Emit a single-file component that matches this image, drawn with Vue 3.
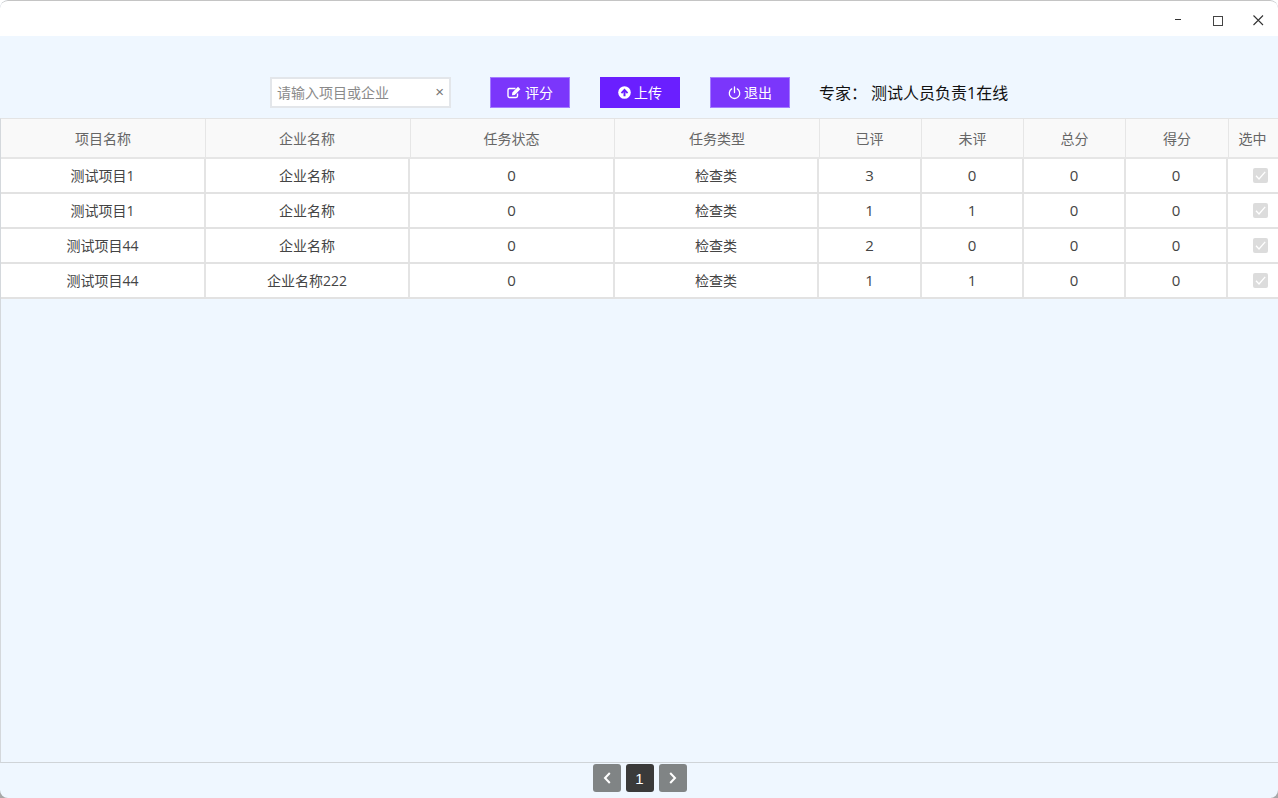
<script setup>
const headCols = ['项目名称', '企业名称', '任务状态', '任务类型', '已评', '未评', '总分', '得分', '选中']
const rows = [
  ['测试项目1', '企业名称', '0', '检查类', '3', '0', '0', '0'],
  ['测试项目1', '企业名称', '0', '检查类', '1', '1', '0', '0'],
  ['测试项目44', '企业名称', '0', '检查类', '2', '0', '0', '0'],
  ['测试项目44', '企业名称222', '0', '检查类', '1', '1', '0', '0']
]
const isNum = (c) => /^\d+$/.test(c)
</script>

<template>
  <div class="window">
    <div class="titlebar">
      <svg class="win-icon" width="11" height="11" viewBox="0 0 11 11"><path d="M2 4.500h6" stroke="#333" fill="none" /></svg>
      <svg class="win-icon" width="11" height="11" viewBox="0 0 11 11"><rect x="0.500" y="1.500" width="9" height="9" stroke="#444" fill="none" /></svg>
      <svg class="win-icon" width="11" height="11" viewBox="0 0 11 11"><path d="M0.500 0.500l9.500 9.500M10 0.500l-9.500 9.500" stroke="#333" fill="none" stroke-width="1.100" /></svg>
    </div>
    <div class="toolbar">
      <div class="search">
        <span class="placeholder">请输入项目或企业</span>
        <span class="clear">×</span>
      </div>
      <button class="btn">
        <svg width="15" height="13" viewBox="0 0 15 13"><path d="M10.500 7.500v2.600a1.400 1.400 0 0 1-1.400 1.400H2.400A1.400 1.400 0 0 1 1 10.100V3.900A1.400 1.400 0 0 1 2.400 2.500H8.500" fill="none" stroke="#fff" stroke-width="1.400" /><path d="M5.300 6.500 11 0.800 13.400 3.200 7.700 8.900 5 9.200Z" fill="#fff" /></svg>
        评分
      </button>
      <button class="btn active">
        <svg width="13" height="13" viewBox="0 0 13 13"><circle cx="6.500" cy="6.500" r="6.300" fill="#fff" /><path d="M6.500 2.600 10.200 6.400 8.900 7.700 7.500 6.200V10.200H5.500V6.200L4.100 7.700 2.800 6.400Z" fill="#6a1fff" /></svg>
        上传
      </button>
      <button class="btn">
        <svg width="13" height="14" viewBox="0 0 13 14"><path d="M6.500 1v5.500" fill="none" stroke="#fff" stroke-width="1.300" stroke-linecap="round" /><path d="M3.700 2.900a5.200 5.200 0 1 0 5.600 0" fill="none" stroke="#fff" stroke-width="1.300" stroke-linecap="round" /></svg>
        退出
      </button>
      <div class="expert"><span class="expert-label">专家：</span><span>测试人员负责1在线</span></div>
    </div>
    <div class="table-wrap">
      <div class="head">
        <div v-for="c in headCols" :key="c" class="hcell">{{ c }}</div>
      </div>
      <div v-for="(r, i) in rows" :key="i" class="row">
        <div v-for="(c, j) in r" :key="j" class="cell" :class="{ num: isNum(c) }">{{ c }}</div>
        <div class="cell">
          <span class="check">
            <svg width="15" height="15" viewBox="0 0 15 15"><path d="M3 7.800 6 11 12.200 3.800" fill="none" stroke="#fff" stroke-width="1.300" /></svg>
          </span>
        </div>
      </div>
    </div>
    <div class="pager">
      <button class="page nav">
        <svg width="10" height="14" viewBox="0 0 10 14"><path d="M7.800 2 3 7l4.800 5" fill="none" stroke="#fff" stroke-width="2" /></svg>
      </button>
      <button class="page current">1</button>
      <button class="page nav">
        <svg width="10" height="14" viewBox="0 0 10 14"><path d="M2.200 2 7 7l-4.800 5" fill="none" stroke="#fff" stroke-width="2" /></svg>
      </button>
    </div>
  </div>
</template>

<style>
html, body { margin: 0; padding: 0; overflow: hidden; }
html { background: linear-gradient(#fff 50%, #a8a8a8 50%); }
body { height: 798px; }
</style>

<style scoped>
.window {
  width: 1278px;
  height: 798px;
  box-sizing: border-box;
  display: flex;
  flex-direction: column;
  background: #eff7ff;
  border-radius: 8px;
  font-family: "Open Sans", "Noto Sans CJK SC", "Liberation Sans", sans-serif;
  overflow: hidden;
}
.titlebar {
  height: 36px;
  box-sizing: border-box;
  background: #fff;
  border-top: 1px solid #c4c4c4;
  border-radius: 8px 8px 0 0;
  display: flex;
  justify-content: flex-end;
  align-items: center;
  gap: 29px;
  padding: 4px 14px 0 0;
}
.toolbar {
  height: 82px;
  box-sizing: border-box;
  padding: 41px 0 0 270px;
  display: flex;
  align-items: flex-start;
  gap: 30px;
}
.search {
  width: 181px;
  height: 31px;
  box-sizing: border-box;
  border: 2px solid #e3e6ea;
  background: #fff;
  display: flex;
  align-items: center;
  justify-content: space-between;
  padding: 0 5px 2px 5px;
  margin-right: 9px;
  font-size: 14px;
  color: #8a8a8a;
}
.clear { font-size: 15px; color: #777; font-family: "Liberation Sans", sans-serif; }
.btn {
  width: 80px;
  height: 31px;
  box-sizing: border-box;
  border: 1px solid #a47bff;
  background: #7b36fb;
  color: #fff;
  font: inherit;
  font-size: 14px;
  display: flex;
  align-items: center;
  justify-content: center;
  gap: 3px;
  padding: 0 0 2px 0;
}
.btn svg { margin-top: 2px; }
.btn.active { background: #6a1fff; border-color: #6a1fff; }
.expert {
  height: 31px;
  display: flex;
  align-items: center;
  font-size: 16px;
  color: #111;
  margin-left: -1px;
  padding-bottom: 2px;
  box-sizing: border-box;
}
.expert-label { margin-right: 4px; }
.table-wrap {
  flex: 1;
  box-sizing: border-box;
  border-left: 1px solid #d4d8dc;
  border-top: 1px solid #e4e4e4;
  border-bottom: 1px solid #cfd4d8;
}
.head, .row { display: grid; }
.head {
  grid-template-columns: 205px 205px 204px 205px 102px 102px 102px 103px 1fr;
  height: 40px;
  background: #f9f9f9;
  border-bottom: 2px solid #e6e6e6;
  box-sizing: border-box;
}
.row {
  grid-template-columns: 205px 204px 205px 204px 103px 102px 102px 102px 1fr;
  height: 35px;
  background: #fff;
  border-bottom: 2px solid #e2e2e2;
  box-sizing: border-box;
}
.hcell, .cell {
  display: flex;
  align-items: center;
  justify-content: center;
  box-sizing: border-box;
  font-size: 14px;
}
.hcell { color: #666; border-right: 1px solid #e6e6e6; }
.hcell:nth-child(2), .hcell:nth-child(3), .hcell:nth-child(5), .hcell:nth-child(9) { padding-right: 2px; }
.cell { color: #444; border-right: 2px solid #e4e4e4; padding-bottom: 2px; }
.cell.num { font-size: 15px; }
.hcell:last-child, .cell:last-child { border-right: 0; }
.check {
  width: 15px;
  height: 15px;
  background: #dcdcdc;
  border-radius: 2px;
  margin: 2px 0 0 14px;
  display: block;
}
.check svg { display: block; }
.pager {
  height: 35px;
  display: flex;
  justify-content: center;
  align-items: flex-start;
  gap: 5px;
  padding: 1px 0 0 1px;
  box-sizing: border-box;
}
.page {
  width: 28px;
  height: 28px;
  border: 0;
  border-radius: 3px;
  padding: 0;
  display: flex;
  align-items: center;
  justify-content: center;
  color: #fff;
  font-size: 15px;
  font-family: "Liberation Sans", sans-serif;
}
.page.nav { background: #808485; }
.page.current { background: #3a3a3a; }
</style>
